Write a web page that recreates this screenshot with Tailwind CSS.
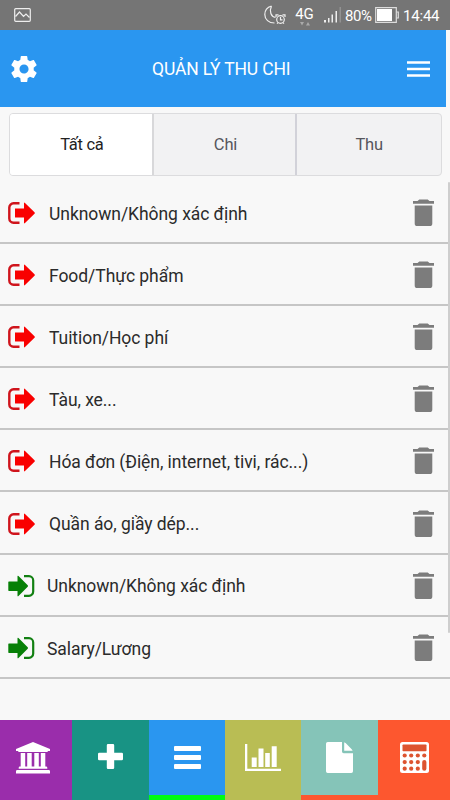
<!DOCTYPE html>
<html lang="vi">
  <head>
    <meta charset="UTF-8" />
    <meta name="viewport" content="width=device-width, initial-scale=1.0" />
    <title>Quản lý thu chi</title>
    <script src="https://cdn.jsdelivr.net/npm/@tailwindcss/browser@4"></script>
  </head>
  <body class="bg-[#f8f8f8] font-[Roboto,sans-serif] text-[#2b2b2b]">
    <svg class="hidden">
      <symbol id="exit" viewBox="0 0 27 22">
        <path d="M11.5 1.3H5.5a4.2 4.2 0 0 0-4.2 4.2v11a4.2 4.2 0 0 0 4.2 4.2h6" fill="none" stroke="#cf141c" stroke-width="2.4" />
        <path d="M7 6.500h9V1.200q0-1 1-.3l9.500 9.300q.7.8 0 1.600L17 21.100q-1 .7-1-.3V15.500H7.600q-.6 0-.6-.6z" fill="#f90000" />
      </symbol>
      <symbol id="enter" viewBox="0 0 27 22">
        <path d="M16 1.200h5a4.200 4.200 0 0 1 4.200 4.200v11.200a4.200 4.200 0 0 1-4.200 4.200h-5" fill="none" stroke="#128012" stroke-width="2.200" />
        <path d="M.3 7.100q0-.6.6-.6h8.600V1.300q0-1 1-.3l9.200 9.200q.7.8 0 1.600L10.500 21q-1 .7-1-.3v-4.800H.9q-.6 0-.6-.6z" fill="#078007" />
      </symbol>
      <symbol id="trash" viewBox="0 0 21 28">
        <path d="M0 2h4.500l1.800-1.600h8.400L16.500 2H21v2.800H0zM1.700 6.600h17.600v17.800q0 2.600-2.600 2.600H4.300q-2.600 0-2.600-2.600z" fill="#7c7c7c" />
      </symbol>
    </svg>

    <div class="flex h-[800px] w-[450px] flex-col overflow-hidden">
      <!-- Status bar -->
      <div class="flex h-[30px] shrink-0 items-center bg-[#757575] pl-3.5 pr-[10px] text-white">
        <svg class="h-[14px] w-[17px]" viewBox="0 0 17 14" fill="none" stroke="#eee" stroke-width="1.2">
          <rect x=".7" y=".7" width="15.6" height="12.6" rx="1" />
          <path d="M1.5 8.500 5.500 4l4 4.500L12 6l3.500 3.500" />
        </svg>
        <svg class="ml-auto h-5 w-[22px]" viewBox="0 0 22 20" fill="none" stroke="#eee" stroke-width="1.2">
          <path d="M7.500 1C2.500 2.500.8 6 .8 9.500c0 5 4 8.500 9.700 8.500M7.500 1C5 6.500 7 11.500 11.500 12.500" />
          <circle cx="16.5" cy="14.5" r="3.8" />
          <path d="M16.500 12v2.800h2M12 12V9.800h2.500M21 12V9.800h-2.500M13 18.600l1-1M20 18.600l-1-1" />
        </svg>
        <div class="ml-[9px] flex w-[19px] flex-col items-center">
          <span class="mt-0.5 text-[15px] leading-[15px]">4G</span>
          <svg class="h-1 w-3" viewBox="0 0 12 4" fill="#aaa"><path d="M1 0h4L3 3.500zM7 3.500h4L9 0z" /></svg>
        </div>
        <svg class="ml-[10px] h-4 w-[18px]" viewBox="0 0 18 16" fill="#eee">
          <path d="M0 13h2v2.500H0zM4 11h1.500v4.500H4zM7.500 7.500H9v8H7.500zM11.500 4H13v11.500h-1.500z" />
          <path d="M15.500 0H17v15.500h-1.500z" fill="#929292" />
        </svg>
        <span class="ml-[3px] mt-0.5 w-[28px] text-[15px] tracking-[-0.4px]">80%</span>
        <svg class="ml-[2px] h-4 w-6" viewBox="0 0 24 16">
          <path d="M.7.7h20.600v14.600H.7zM21.500 5h1.800v6h-1.800" fill="none" stroke="#ddd" stroke-width="1.2" />
          <path d="M2 2h15v12H2z" fill="#fff" />
        </svg>
        <span class="ml-1 mt-0.5 w-[37px] text-[15px] tracking-[-0.2px]">14:44</span>
      </div>

      <!-- Header -->
      <div class="flex h-[77px] w-[446px] shrink-0 items-center justify-between bg-[#2a96f0] pl-[11px] pr-4 text-white">
        <svg class="h-[26px] w-[26px]" viewBox="2 2 20 20" fill="currentColor">
          <path d="M19.43 12.980c.04-.32.07-.64.07-.98s-.03-.66-.07-.98l2.110-1.650c.19-.15.24-.42.12-.64l-2-3.460c-.12-.22-.39-.3-.61-.22l-2.490 1c-.52-.4-1.080-.73-1.690-.98l-.38-2.650A.488.488 0 0 0 14 2h-4c-.25 0-.46.18-.49.42l-.38 2.650c-.61.25-1.170.59-1.690.98l-2.490-1c-.23-.09-.49 0-.61.22l-2 3.460c-.13.22-.07.49.12.64l2.110 1.650c-.04.32-.07.65-.07.98s.03.66.07.98l-2.110 1.650c-.19.15-.24.42-.12.64l2 3.460c.12.22.39.3.61.22l2.490-1c.52.4 1.080.73 1.690.98l.38 2.650c.03.24.24.42.49.42h4c.25 0 .46-.18.49-.42l.38-2.650c.61-.25 1.170-.59 1.690-.98l2.490 1c.23.09.49 0 .61-.22l2-3.460c.12-.22.07-.49-.12-.64zM12 15.500c-1.930 0-3.500-1.570-3.500-3.500s1.570-3.500 3.500-3.500 3.500 1.570 3.500 3.500-1.570 3.500-3.500 3.500z" />
        </svg>
        <h1 class="w-[140px] whitespace-nowrap pt-0.5 text-[17.5px] tracking-[-0.15px]">QUẢN LÝ THU CHI</h1>
        <svg class="h-4 w-[23px]" viewBox="0 0 23 16" fill="currentColor">
          <path d="M0 .2h23v2.600H0zM0 6.700h23v2.600H0zM0 13.200h23v2.600H0z" />
        </svg>
      </div>

      <!-- Filter -->
      <div class="ml-[9px] mt-1.5 grid h-[63px] w-[433px] shrink-0 grid-cols-3 overflow-hidden rounded-[4px] border border-[#dcdcde] bg-[#f2f2f3] text-[16.5px] text-[#56565c]">
        <button class="border-r-2 border-[#d8d8da] bg-white pl-0.5 pt-0.5 tracking-[-0.3px] text-[#222]">Tất cả</button>
        <button class="border-r-2 border-[#d2d2d9] pl-0.5 pt-0.5 tracking-[-0.2px]">Chi</button>
        <button class="pt-0.5 tracking-[-0.2px]">Thu</button>
      </div>

      <!-- Category list -->
      <div class="flex min-h-0 flex-1 pt-1.5">
        <ul id="list" class="flex-1"></ul>
        <div class="-ml-0.5 h-[451px] w-0.5 rounded bg-[#cecece]"></div>
      </div>

      <!-- Bottom tabs -->
      <div class="grid h-20 shrink-0 grid-cols-[72px_77px_76px_76px_77px_72px] text-white">
        <div class="flex justify-center bg-[#9a2dab] pr-1.5 pt-[22px]">
          <svg class="h-8 w-[34px]" viewBox="0 0 34 32" fill="currentColor">
            <path d="M17 0 34 7v2h-2q0 1-1.200 1H3.200Q2 10 2 9H0V7zM4.700 11h4.500v13.500h2V11h4.500v13.500h2.600V11h4.500v13.500h2V11h4.500v13.500h.8q1.200 0 1.200 1.200v1H2.700v-1q0-1.200 1.200-1.200h.8zM1.200 28h31.600Q34 28 34 29.200v2.300H0v-2.300Q0 28 1.200 28z" />
          </svg>
        </div>
        <div class="flex justify-center bg-[#189384] pt-6">
          <svg class="h-[25px] w-[25px]" viewBox="0 0 25 25" fill="currentColor">
            <path d="M10 0h5q1.200 0 1.200 1.200v7.600h7.600q1.200 0 1.200 1.200v5q0 1.200-1.200 1.200h-7.600v7.600Q16.200 25 15 25h-5q-1.200 0-1.200-1.200v-7.600H1.200Q0 16.200 0 15v-5q0-1.200 1.200-1.200h7.600V1.200Q8.800 0 10 0z" />
          </svg>
        </div>
        <div class="flex justify-center border-b-[5px] border-[#00fb14] bg-[#2a96f0] pt-[26px]">
          <svg class="h-[23px] w-[27px]" viewBox="0 0 27 23" fill="currentColor">
            <rect width="27" height="5" rx="1" />
            <rect y="9" width="27" height="5" rx="1" />
            <rect y="18" width="27" height="5" rx="1" />
          </svg>
        </div>
        <div class="flex justify-center bg-[#b9bd54] pt-6">
          <svg class="h-[27px] w-[36px]" viewBox="0 0 36 27" fill="currentColor">
            <path d="M0 0h2.300v24.700H36V27H0zM6.700 13.500h5V23h-5zM13.500 4.500h5V23h-5zM20.200 9h4.600v14h-4.600zM26.700 2.300h5V23h-5z" />
          </svg>
        </div>
        <div class="flex justify-center border-b-[5px] border-[#fd572f] bg-[#85c4b8] pt-[22px]">
          <svg class="h-[31px] w-[27px]" viewBox="0 0 27 31" fill="currentColor">
            <path d="M1.700 0H16v9.500q0 1.700 1.700 1.700H27v18.100q0 1.700-1.700 1.700H1.700Q0 31 0 29.300V1.700Q0 0 1.700 0zM18.200.2q.8.300 1.400.9l6.100 6.100q.6.600.9 1.600h-8.400z" />
          </svg>
        </div>
        <div class="flex justify-center bg-[#fd572f] pt-[22px]">
          <svg class="h-[31px] w-[29px]" viewBox="0 0 29 31">
            <rect width="29" height="31" rx="2.5" fill="#fff" />
            <g fill="#dd5430">
              <rect x="2.5" y="2.5" width="24" height="6.7" rx=".8" />
              <circle cx="4.7" cy="13.5" r="2.1" /><circle cx="11.2" cy="13.5" r="2.1" /><circle cx="17.8" cy="13.5" r="2.1" /><circle cx="24.3" cy="13.5" r="2.1" />
              <circle cx="4.7" cy="20.1" r="2.1" /><circle cx="11.2" cy="20.1" r="2.1" /><circle cx="17.8" cy="20.1" r="2.1" />
              <circle cx="4.7" cy="26.7" r="2.1" /><circle cx="11.2" cy="26.7" r="2.1" /><circle cx="17.8" cy="26.7" r="2.1" />
              <rect x="22.2" y="18" width="4.2" height="10.8" rx="2.1" />
            </g>
          </svg>
        </div>
      </div>
    </div>

    <script>
      const items = [
        { name: "Unknown/Không xác định", type: "exit" },
        { name: "Food/Thực phẩm", type: "exit" },
        { name: "Tuition/Học phí", type: "exit" },
        { name: "Tàu, xe...", type: "exit" },
        { name: "Hóa đơn (Điện, internet, tivi, rác...)", type: "exit" },
        { name: "Quần áo, giầy dép...", type: "exit" },
        { name: "Unknown/Không xác định", type: "enter" },
        { name: "Salary/Lương", type: "enter" },
      ];

      document.getElementById("list").innerHTML = items
        .map(
          (item) => `
          <li class="flex h-[62.1px] items-center border-b-2 border-[#c6c6c6] pl-2 pr-4 pt-0.5">
            <svg class="h-[22px] w-[27px]"><use href="#${item.type}" /></svg>
            <span class="${item.type == "exit" ? "ml-3.5" : "ml-3"} whitespace-nowrap pt-0.5 text-[17.5px] tracking-[-0.06px]">${item.name}</span>
            <svg class="ml-auto h-7 w-[21px]"><use href="#trash" /></svg>
          </li>`
        )
        .join("");
    </script>
  </body>
</html>
